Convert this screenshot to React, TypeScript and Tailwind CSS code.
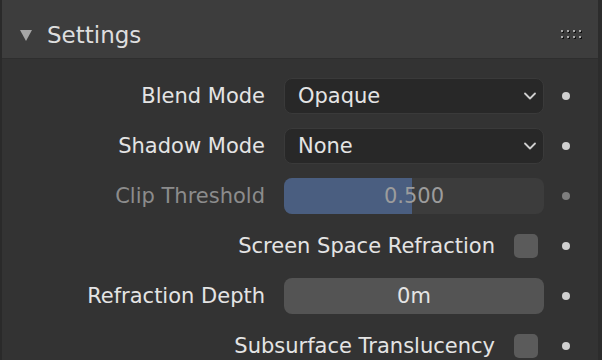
import { ChevronDown } from 'lucide-react'

const font = { fontFamily: '"DejaVu Sans", "Liberation Sans", sans-serif' }

function Dot({ dim }: { dim?: boolean }) {
  return (
    <div
      className={[
        'w-[8px] h-[8px] rounded-full shrink-0',
        dim ? 'bg-[#7e7e7e]' : 'bg-[#cfcfcf]',
      ].join(' ')}
    />
  )
}

function Grip() {
  const cols = [0, 6, 12, 18]
  const rows = [0, 6]
  return (
    <svg width="22" height="10" viewBox="0 0 22 10" className="shrink-0">
      {rows.map(r =>
        cols.map(c => (
          <g key={`${r}-${c}`}>
            <rect x={c + 1} y={r + 1} width="2" height="2" fill="#111" />
            <rect x={c} y={r} width="2" height="2" fill="#a8a8a8" />
          </g>
        ))
      )}
    </svg>
  )
}

function Label({ text, dim }: { text: string; dim?: boolean }) {
  return (
    <div
      className={[
        'flex-1 text-right text-[21px] leading-none whitespace-nowrap',
        dim ? 'text-[#8c8c8c]' : 'text-[#e4e4e4]',
      ].join(' ')}
    >
      {text}
    </div>
  )
}

function DropdownRow({ label, value }: { label: string; value: string }) {
  return (
    <div className="h-[50px] flex items-center pr-[28px]">
      <Label text={label} />
      <div className="ml-[19px] w-[260px] h-[36px] rounded-[8px] bg-[#282828] border border-[#3a3a3a] flex items-center pl-[13px] pr-[3px]">
        <span className="flex-1 text-[21px] leading-none text-[#e4e4e4]">{value}</span>
        <ChevronDown size={20} strokeWidth={2.2} className="text-[#cfcfcf]" />
      </div>
      <div className="ml-[18px]">
        <Dot />
      </div>
    </div>
  )
}

function CheckRow({ label }: { label: string }) {
  return (
    <div className="h-[50px] flex items-center pr-[28px]">
      <Label text={label} />
      <div className="ml-[19px] w-[24px] h-[24px] rounded-[5px] bg-[#5b5b5b] shrink-0" />
      <div className="ml-[24px]">
        <Dot />
      </div>
    </div>
  )
}

export default function App() {
  return (
    <div className="w-[602px] h-[360px] overflow-hidden flex bg-[#2b2b2b]" style={font}>
      <div className="w-[2px] bg-[#2a2a2a] shrink-0" />
      <div className="flex-1 flex flex-col bg-[#333333]">
        {/* header */}
        <div className="h-[59px] shrink-0 bg-[#3d3d3d] border-b border-[#2e2e2e] flex items-center pt-[12px] pl-[18px] pr-[15px]">
          <svg width="12" height="11" viewBox="0 0 12 11" className="shrink-0 mt-[1px]">
            <path d="M0 0 L12 0 L6 11 Z" fill="#a6a6a6" />
          </svg>
          <span className="ml-[15px] text-[23px] leading-none text-[#dedede] flex-1">Settings</span>
          <Grip />
        </div>

        {/* body */}
        <div className="pt-[12px] flex flex-col">
          <DropdownRow label="Blend Mode" value="Opaque" />
          <DropdownRow label="Shadow Mode" value="None" />

          <div className="h-[50px] flex items-center pr-[28px]">
            <Label text="Clip Threshold" dim />
            <div className="ml-[19px] w-[260px] h-[36px] rounded-[8px] bg-[#3c3c3c] overflow-hidden relative flex items-center justify-center">
              <div className="absolute left-0 top-0 bottom-0 w-[128px] bg-[#4a5e80]" />
              <span className="relative text-[21px] leading-none text-[#9c9c9c]">0.500</span>
            </div>
            <div className="ml-[18px]">
              <Dot dim />
            </div>
          </div>

          <CheckRow label="Screen Space Refraction" />

          <div className="h-[50px] flex items-center pr-[28px]">
            <Label text="Refraction Depth" />
            <div className="ml-[19px] w-[260px] h-[36px] rounded-[8px] bg-[#545454] flex items-center justify-center">
              <span className="text-[21px] leading-none text-[#e4e4e4]">0m</span>
            </div>
            <div className="ml-[18px]">
              <Dot />
            </div>
          </div>

          <CheckRow label="Subsurface Translucency" />
        </div>
      </div>
      <div className="w-[4px] bg-[#2c2c2c] shrink-0" />
    </div>
  )
}
